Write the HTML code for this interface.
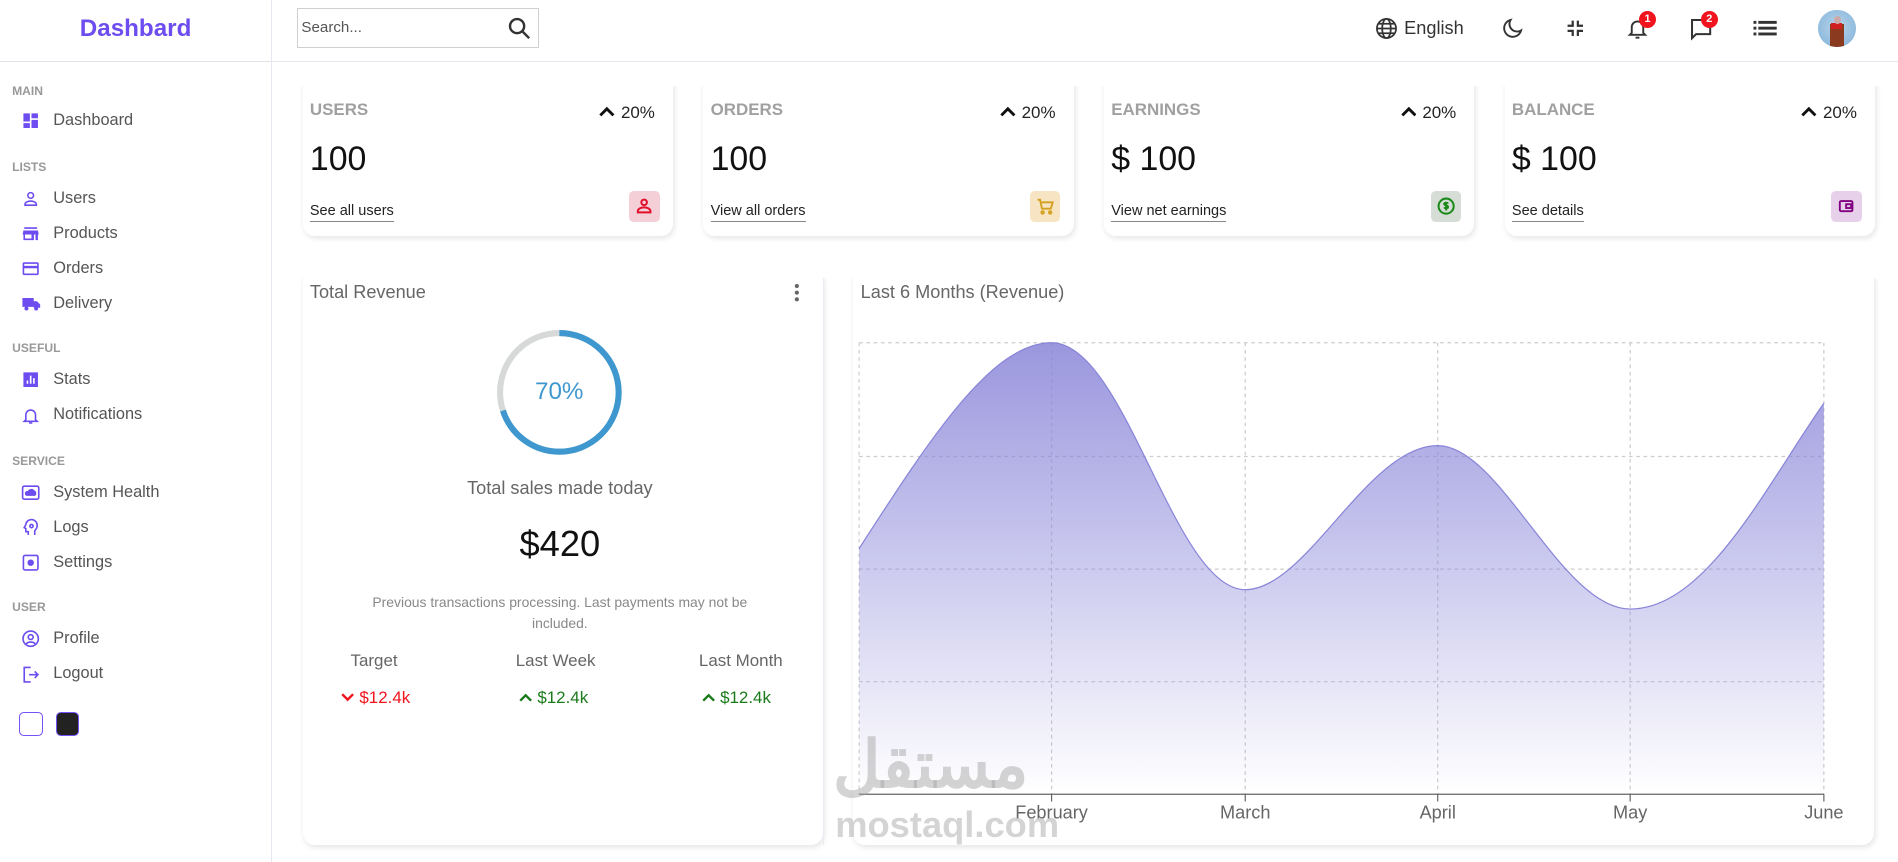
<!DOCTYPE html>
<html><head><meta charset="utf-8"><style>
html,body{margin:0;padding:0;background:#fff;overflow:hidden}
body{width:1568px;height:712px;zoom:1.2105;font-family:"Liberation Sans",sans-serif;position:relative;color:#333}
.abs{position:absolute}
.sb{left:0;top:0;width:224px;height:712px;border-right:1px solid #e8e8f2}
.logo{left:0;width:224px;top:12px;text-align:center;font-size:20px;font-weight:bold;color:#6d4cf0}
.sbl{left:0;top:50px;width:224px;border-top:1px solid #e2e2ea}
.sec{left:10px;font-size:10px;font-weight:bold;color:#999}
.it{left:17px;font-size:13.5px;color:#555;height:18px;line-height:18px}
.it svg{position:absolute;left:0;top:1px}
.it span{position:absolute;left:27px;white-space:nowrap}
.hd{left:225px;top:50px;width:1343px;border-top:1px solid #e6e6f0}
.card{background:#fff;border-radius:10px;box-shadow:1px 2px 5px rgba(0,0,0,.10)}
.wt{font-size:14px;font-weight:bold;color:#a0a0a0}
.pc{font-size:14px;color:#222}
.pc svg{vertical-align:1px;margin-right:5px}
.val{font-size:28px;font-weight:300;color:#111}
.lnk{font-size:12px;color:#222;border-bottom:1px solid #888;padding-bottom:1px}
.ib{width:25px;height:25px;border-radius:4px}
.badge{width:14px;height:14px;border-radius:50%;background:#f0141e;color:#fff;font-size:9px;font-weight:bold;text-align:center;line-height:14px}
.gl{font-size:15px;color:#666}
</style></head><body>
<div class="abs sb"></div>
<div class="abs logo">Dashbard</div>
<div class="abs sbl"></div>

<div class="abs sec" style="top:69px">MAIN</div>
<div class="abs it" style="top:91px"><svg width="16" height="16" viewBox="0 0 24 24" fill="#6d4cf0"><path d="M3 13h8V3H3zm0 8h8v-6H3zm10 0h8V11h-8zm0-18v6h8V3z"/></svg><span>Dashboard</span></div>
<div class="abs sec" style="top:132px">LISTS</div>
<div class="abs it" style="top:155px"><svg width="16" height="16" viewBox="0 0 24 24" fill="none" stroke="#6d4cf0" stroke-width="2"><circle cx="12" cy="8" r="3.5"/><path d="M5 20v-1c0-2.5 3.5-4 7-4s7 1.5 7 4v1z"/></svg><span>Users</span></div>
<div class="abs it" style="top:184px"><svg width="16" height="16" viewBox="0 0 24 24" fill="#6d4cf0"><path d="M4 4h16v2H4zm-1 4h18l1 5h-1v7H3v-7H2zm2 5v5h8v-5zm11 0v7h2v-7z"/></svg><span>Products</span></div>
<div class="abs it" style="top:213px"><svg width="16" height="16" viewBox="0 0 24 24" fill="none" stroke="#6d4cf0" stroke-width="2"><rect x="3" y="5" width="18" height="14" rx="1"/><path d="M3 10h18" stroke-width="3"/></svg><span>Orders</span></div>
<div class="abs it" style="top:242px"><svg width="17" height="16" viewBox="0 0 24 24" fill="#6d4cf0"><path d="M1 5h14v11H1zm14 4h4l4 4v4h-8z"/><circle cx="6" cy="18" r="2.5"/><circle cx="18" cy="18" r="2.5"/></svg><span>Delivery</span></div>
<div class="abs sec" style="top:282px">USEFUL</div>
<div class="abs it" style="top:305px"><svg width="16" height="16" viewBox="0 0 24 24" fill="#6d4cf0"><path d="M3 3h18v18H3zm4 10v4h2v-4zm4-6v10h2V7zm4 3v7h2v-7z"/></svg><span>Stats</span></div>
<div class="abs it" style="top:334px"><svg width="16" height="16" viewBox="0 0 24 24" fill="none" stroke="#6d4cf0" stroke-width="2"><path d="M6 17V11a6 6 0 0112 0v6l2 2H4z"/><path d="M10 21h4"/></svg><span>Notifications</span></div>
<div class="abs sec" style="top:375px">SERVICE</div>
<div class="abs it" style="top:398px"><svg width="16" height="16" viewBox="0 0 24 24" fill="none" stroke="#6d4cf0" stroke-width="2"><rect x="2" y="4" width="20" height="16" rx="2"/><path d="M7 15h10a3 3 0 00-1-5 4 4 0 00-7 1 2 2 0 00-2 4z" fill="#6d4cf0"/></svg><span>System Health</span></div>
<div class="abs it" style="top:427px"><svg width="16" height="16" viewBox="0 0 24 24" fill="none" stroke="#6d4cf0" stroke-width="2"><path d="M9 21v-4H6v-4L4 12l2-4a7 7 0 0114 2c0 3-2 4-3 6v5"/><circle cx="13" cy="10" r="2"/></svg><span>Logs</span></div>
<div class="abs it" style="top:456px"><svg width="16" height="16" viewBox="0 0 24 24" fill="none" stroke="#6d4cf0" stroke-width="2"><rect x="3" y="3" width="18" height="18" rx="2"/><circle cx="12" cy="12" r="3" fill="#6d4cf0"/></svg><span>Settings</span></div>
<div class="abs sec" style="top:496px">USER</div>
<div class="abs it" style="top:519px"><svg width="16" height="16" viewBox="0 0 24 24" fill="none" stroke="#6d4cf0" stroke-width="2"><circle cx="12" cy="12" r="9.5"/><circle cx="12" cy="10" r="3"/><path d="M6.5 18.5c2-3 9-3 11 0"/></svg><span>Profile</span></div>
<div class="abs it" style="top:548px"><svg width="16" height="16" viewBox="0 0 24 24" fill="none" stroke="#6d4cf0" stroke-width="2"><path d="M12 3H4v18h8"/><path d="M10 12h11m-4-4l4 4-4 4"/></svg><span>Logout</span></div>
<div class="abs" style="left:16px;top:588px;width:18px;height:18px;border:1px solid #7451f8;border-radius:4px;background:#fff"></div>
<div class="abs" style="left:46px;top:588px;width:18px;height:18px;border:1px solid #7451f8;border-radius:4px;background:#222"></div>

<!-- header -->
<div class="abs hd"></div>
<div class="abs" style="left:245px;top:7px;width:199px;height:31px;border:1px solid #d0d0d0"></div>
<div class="abs" style="left:249px;top:16px;font-size:12.5px;color:#555">Search...</div>
<svg class="abs" style="left:419px;top:13px" width="20" height="20" viewBox="0 0 24 24" fill="none" stroke="#333" stroke-width="2.4"><circle cx="10" cy="10" r="7"/><path d="M15 15l7 7"/></svg>
<svg class="abs" style="left:1136px;top:14px" width="19" height="19" viewBox="0 0 24 24" fill="none" stroke="#333" stroke-width="1.8"><circle cx="12" cy="12" r="10"/><ellipse cx="12" cy="12" rx="4.5" ry="10"/><path d="M2 12h20M4 7h16M4 17h16"/></svg>
<div class="abs" style="left:1160px;top:15px;font-size:15px;color:#333">English</div>
<svg class="abs" style="left:1240px;top:14px" width="19" height="19" viewBox="0 0 24 24" fill="none" stroke="#333" stroke-width="2"><path d="M10 3a9 9 0 1011 11A8 8 0 0110 3z"/></svg>
<svg class="abs" style="left:1293px;top:15px" width="17" height="17" viewBox="0 0 24 24" fill="none" stroke="#333" stroke-width="2.6"><path d="M9 3v6H3M15 3v6h6M9 21v-6H3M15 21v-6h6"/></svg>
<svg class="abs" style="left:1343px;top:13px" width="19" height="20" viewBox="0 0 24 24" fill="none" stroke="#333" stroke-width="2"><path d="M6 17V11a6 6 0 0112 0v6l2 2H4z"/><path d="M10 22h4"/></svg>
<div class="abs badge" style="left:1354px;top:9px">1</div>
<svg class="abs" style="left:1395px;top:14px" width="20" height="20" viewBox="0 0 24 24" fill="none" stroke="#333" stroke-width="2"><path d="M3 3h18v14H7l-4 4z"/></svg>
<div class="abs badge" style="left:1405px;top:9px">2</div>
<svg class="abs" style="left:1448px;top:15px" width="20" height="16" viewBox="0 0 24 20" fill="#333"><rect x="0" y="3" width="3" height="3"/><rect x="5" y="3" width="19" height="3"/><rect x="0" y="9" width="3" height="3"/><rect x="5" y="9" width="19" height="3"/><rect x="0" y="15" width="3" height="3"/><rect x="5" y="15" width="19" height="3"/></svg>
<div class="abs" style="left:1502px;top:8px;width:31px;height:31px;border-radius:50%;background:radial-gradient(circle at 50% 45%,#b8d4ea,#7fb0d8);overflow:hidden"><div style="position:absolute;left:10px;top:12px;width:11px;height:20px;background:#8a3a1e"></div><div style="position:absolute;left:11px;top:11px;width:9px;height:5px;background:#d02020"></div><div style="position:absolute;left:13px;top:5px;width:6px;height:7px;background:#caa;border-radius:50%"></div></div>

<!-- widgets -->
<div class="abs card" style="left:250px;top:60px;width:306px;height:135px"></div>
<div class="abs card" style="left:581px;top:60px;width:306px;height:135px"></div>
<div class="abs card" style="left:912px;top:60px;width:306px;height:135px"></div>
<div class="abs card" style="left:1243px;top:60px;width:306px;height:135px"></div>
<div class="abs" style="left:225px;top:51px;width:1343px;height:20px;background:#fff"></div>

<div class="abs wt" style="left:256px;top:83px">USERS</div>
<div class="abs wt" style="left:587px;top:83px">ORDERS</div>
<div class="abs wt" style="left:918px;top:83px">EARNINGS</div>
<div class="abs wt" style="left:1249px;top:83px">BALANCE</div>
<div class="abs pc" style="left:495px;top:85px"><svg width="13" height="9" viewBox="0 0 12 8" fill="none" stroke="#111" stroke-width="2.2"><path d="M1 7l5-5 5 5"/></svg>20%</div>
<div class="abs pc" style="left:826px;top:85px"><svg width="13" height="9" viewBox="0 0 12 8" fill="none" stroke="#111" stroke-width="2.2"><path d="M1 7l5-5 5 5"/></svg>20%</div>
<div class="abs pc" style="left:1157px;top:85px"><svg width="13" height="9" viewBox="0 0 12 8" fill="none" stroke="#111" stroke-width="2.2"><path d="M1 7l5-5 5 5"/></svg>20%</div>
<div class="abs pc" style="left:1488px;top:85px"><svg width="13" height="9" viewBox="0 0 12 8" fill="none" stroke="#111" stroke-width="2.2"><path d="M1 7l5-5 5 5"/></svg>20%</div>
<div class="abs val" style="left:256px;top:116px">100</div>
<div class="abs val" style="left:587px;top:116px">100</div>
<div class="abs val" style="left:918px;top:116px">$ 100</div>
<div class="abs val" style="left:1249px;top:116px">$ 100</div>
<div class="abs lnk" style="left:256px;top:168px">See all users</div>
<div class="abs lnk" style="left:587px;top:168px">View all orders</div>
<div class="abs lnk" style="left:918px;top:168px">View net earnings</div>
<div class="abs lnk" style="left:1249px;top:168px">See details</div>
<div class="abs ib" style="left:520px;top:158px;background:#f5cfd8"><svg width="25" height="25" viewBox="0 0 24 24" fill="none" stroke="#e0102a" stroke-width="1.6"><circle cx="12" cy="9" r="2.2"/><path d="M7 17v-1c0-2 2.5-3 5-3s5 1 5 3v1z"/></svg></div>
<div class="abs ib" style="left:851px;top:158px;background:#f7e4c2"><svg width="25" height="25" viewBox="0 0 24 24" fill="none" stroke="#d4a020" stroke-width="1.5"><path d="M6 7h2l1.5 7h7l1.5-5H9"/><circle cx="10" cy="17" r="1"/><circle cx="16" cy="17" r="1"/></svg></div>
<div class="abs ib" style="left:1182px;top:158px;background:#d6ddd6"><svg width="25" height="25" viewBox="0 0 24 24" fill="none" stroke="#1a8a1a" stroke-width="1.6"><circle cx="12" cy="12" r="6"/><path d="M13.5 10c-.5-1-3-1-3 .3s3 .9 3 2.3-2.5 1.2-3 .3M12 8.5v7"/></svg></div>
<div class="abs ib" style="left:1513px;top:158px;background:#e6d0ea"><svg width="25" height="25" viewBox="0 0 24 24" fill="none" stroke="#800080" stroke-width="1.5"><rect x="7" y="8" width="10" height="8" rx="1"/><rect x="12" y="10.5" width="4" height="3"/></svg></div>

<!-- bottom cards -->
<div class="abs card" style="left:250px;top:222px;width:430px;height:476px"></div>
<div class="abs card" style="left:705px;top:222px;width:843px;height:476px"></div>
<div class="abs" style="left:225px;top:200px;width:1343px;height:30px;background:#fff"></div>
<div class="abs" style="left:680px;top:230px;width:1px;height:468px;background:#ececf4"></div>

<div class="abs gl" style="left:256px;top:233px">Total Revenue</div>
<svg class="abs" style="left:654px;top:234px" width="8" height="16"><circle cx="4" cy="2.5" r="1.7" fill="#666"/><circle cx="4" cy="8" r="1.7" fill="#666"/><circle cx="4" cy="13.5" r="1.7" fill="#666"/></svg>
<svg class="abs" style="left:408px;top:270px" width="108" height="108" viewBox="0 0 108 108"><circle cx="54" cy="54" r="49" fill="none" stroke="#d6d9d8" stroke-width="5"/><circle cx="54" cy="54" r="49" fill="none" stroke="#3e98cf" stroke-width="5" stroke-dasharray="215.5 400" transform="rotate(-90 54 54)"/></svg>
<div class="abs" style="left:408px;top:312px;width:108px;text-align:center;font-size:20px;color:#3e98cf">70%</div>
<div class="abs" style="left:250px;width:425px;top:395px;text-align:center;font-size:15px;color:#666">Total sales made today</div>
<div class="abs" style="left:250px;width:425px;top:432px;text-align:center;font-size:30px;color:#111">$420</div>
<div class="abs" style="left:290px;width:345px;top:489px;text-align:center;font-size:11.5px;line-height:17px;color:#888">Previous transactions processing. Last payments may not be included.</div>
<div class="abs" style="left:259px;width:100px;top:538px;text-align:center;font-size:14px;color:#666">Target</div>
<div class="abs" style="left:409px;width:100px;top:538px;text-align:center;font-size:14px;color:#666">Last Week</div>
<div class="abs" style="left:562px;width:100px;top:538px;text-align:center;font-size:14px;color:#666">Last Month</div>
<div class="abs" style="left:282px;top:568px;font-size:14px;color:#f0141e"><svg width="11" height="9" viewBox="0 0 12 10" fill="none" stroke="#f0141e" stroke-width="2.2"><path d="M1 2l5 5 5-5"/></svg> $12.4k</div>
<div class="abs" style="left:429px;top:568px;font-size:14px;color:#1a7a1a"><svg width="11" height="9" viewBox="0 0 12 10" fill="none" stroke="#1a7a1a" stroke-width="2.2"><path d="M1 8l5-5 5 5"/></svg> $12.4k</div>
<div class="abs" style="left:580px;top:568px;font-size:14px;color:#1a7a1a"><svg width="11" height="9" viewBox="0 0 12 10" fill="none" stroke="#1a7a1a" stroke-width="2.2"><path d="M1 8l5-5 5 5"/></svg> $12.4k</div>

<div class="abs gl" style="left:711px;top:233px">Last 6 Months (Revenue)</div>
<svg class="abs" style="left:700px;top:270px" width="840" height="420" viewBox="700 270 840 420">
<defs><linearGradient id="g" x1="0" y1="0" x2="0" y2="1"><stop offset="0" stop-color="#8884d8" stop-opacity=".85"/><stop offset="1" stop-color="#8884d8" stop-opacity="0"/></linearGradient></defs>
<g stroke="#ccc" stroke-dasharray="3 3" fill="none"><path d="M710 283H1507M710 377H1507M710 470H1507M710 563H1507M710 283V656M869 283V656M1029 283V656M1188 283V656M1347 283V656M1507 283V656"/></g>
<path d="M710 453C770 360 820 283 869 283C930 283 970 487 1029 487C1080 487 1130 368 1188 368C1240 368 1290 503 1347 503C1410 503 1460 400 1507 333V656H710Z" fill="url(#g)" stroke="none"/>
<path d="M710 453C770 360 820 283 869 283C930 283 970 487 1029 487C1080 487 1130 368 1188 368C1240 368 1290 503 1347 503C1410 503 1460 400 1507 333" fill="none" stroke="#8884d8" stroke-width="1"/>
<path d="M710 656H1507" stroke="#666"/>
<g stroke="#666"><path d="M869 656v6M1029 656v6M1188 656v6M1347 656v6M1507 656v6"/></g>
<g font-family="Liberation Sans" font-size="15" fill="#666" text-anchor="middle"><text x="869" y="676">February</text><text x="1029" y="676">March</text><text x="1188" y="676">April</text><text x="1347" y="676">May</text><text x="1507" y="676">June</text></g>
</svg>
<div class="abs" style="left:688px;top:602px;font-family:'Liberation Sans','Noto Sans CJK SC',sans-serif;font-size:54px;font-weight:bold;color:rgba(160,160,160,.45);line-height:60px">مستقل</div>
<div class="abs" style="left:690px;top:664px;font-size:30px;font-weight:bold;color:rgba(160,160,160,.45)">mostaql.com</div>
</body></html>
